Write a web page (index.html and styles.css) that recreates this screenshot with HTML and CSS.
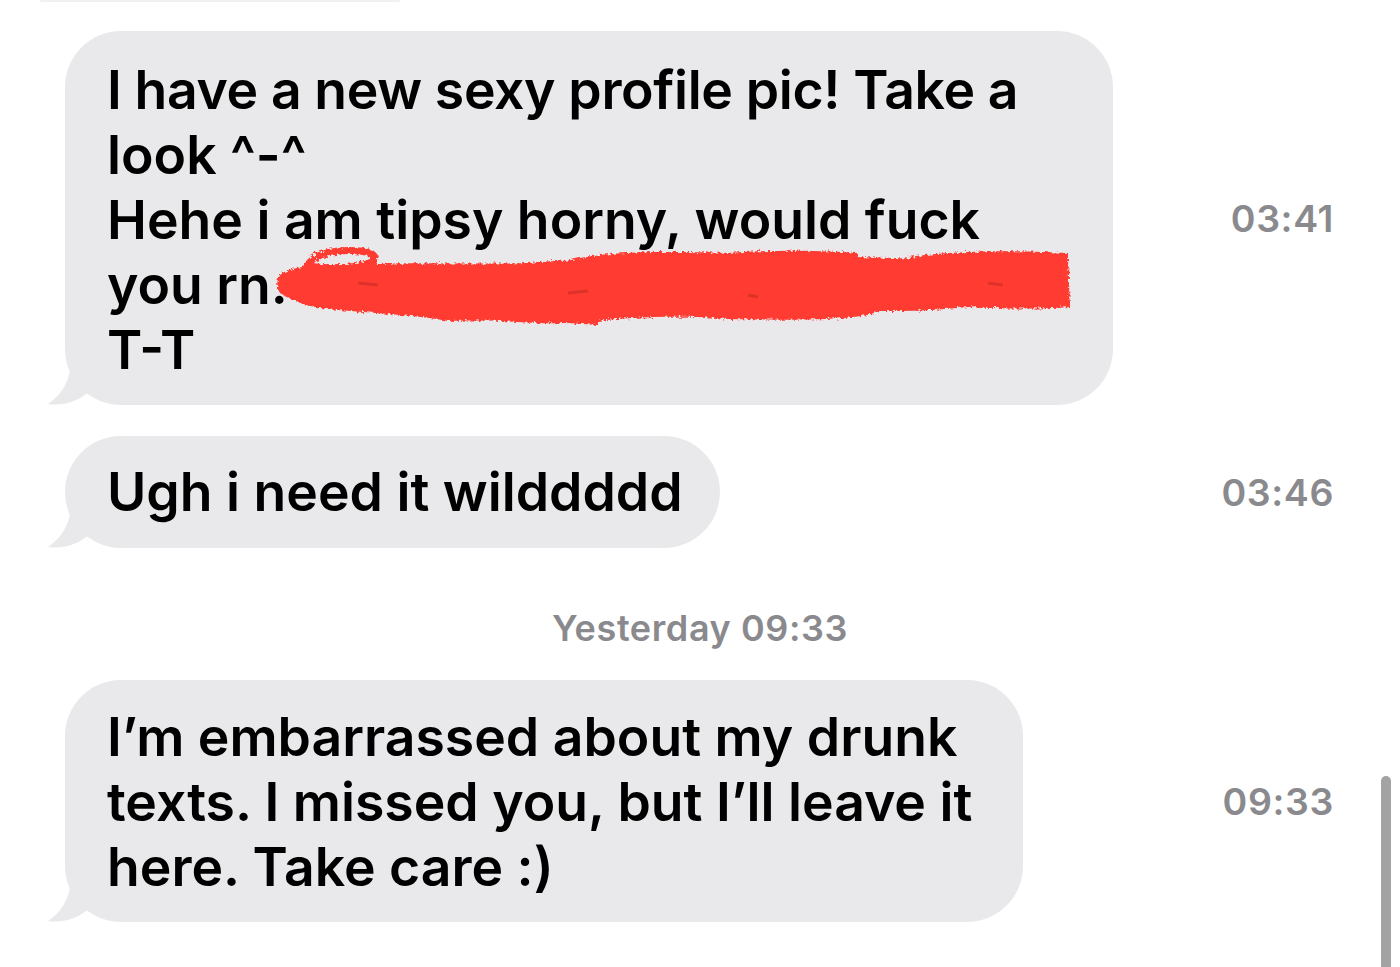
FILE: index.html
```html
<!DOCTYPE html>
<html>
<head>
<meta charset="utf-8">
<link rel="stylesheet" href="styles.css">
</head>
<body>
<div class="screen">
  <div class="prev-edge"></div>

  <div class="row row1">
    <div class="bubble b1">
      <div class="text"><span class="tight">I have a new sexy profile pic! Take a</span><br>look ^-^<br>Hehe i am tipsy horny, would fuck<br>you rn.<br>T-T</div>
      <svg class="scribble" width="810" height="84" viewBox="0 0 810 84">
        <defs>
          <filter id="rough" x="-5%" y="-20%" width="110%" height="140%">
            <feTurbulence type="fractalNoise" baseFrequency="0.35" numOctaves="2" seed="3" result="n"/>
            <feDisplacementMap in="SourceGraphic" in2="n" scale="6"/>
          </filter>
        </defs>
        <g filter="url(#rough)" fill="#ff3b30">
          <path d="M14 30 C30 22 60 20 90 22 C140 18 200 22 260 20 C300 16 330 18 340 14 C400 12 440 18 480 16 C540 12 600 14 660 16 C700 12 760 14 800 16 L802 64 C770 66 740 66 700 64 C660 68 640 68 610 68 C600 76 540 78 460 76 C420 72 360 74 330 78 C280 80 220 76 180 78 C150 72 100 70 60 66 C40 64 24 58 12 50 C8 44 8 36 14 30 Z"/>
          <path d="M300 18 C330 8 400 8 460 10 C520 6 560 8 590 10 L590 40 L300 40 Z"/>
          <path d="M640 14 C700 6 760 8 800 10 L800 40 L640 40 Z"/>
          <path d="M120 66 C180 74 260 82 300 80 L330 82 L330 68 L120 62 Z"/>
        </g>
        <path d="M40 22 C46 10 70 6 92 8 C110 10 112 18 96 22 C76 26 50 26 40 22 Z" fill="none" stroke="#ff3b30" stroke-width="7" filter="url(#rough)"/>
        <g opacity="0.25">
          <path d="M90 40 L110 42 M300 50 L320 48 M480 52 L490 54 M720 40 L735 42" stroke="#7a1a12" stroke-width="3"/>
        </g>
      </svg>
      <svg class="tail" width="50" height="36" viewBox="0 0 50 36"><path d="M50 0 L22 0 C20 14 12 26 0 34 C14 36 28 32 38 24 C42 22 46 24 50 24 Z" fill="#e9e9eb"/></svg>
    </div>
    <div class="time">03:41</div>
  </div>

  <div class="row row2">
    <div class="bubble b2">
      <div class="text">Ugh i need it wilddddd</div>
      <svg class="tail" width="50" height="36" viewBox="0 0 50 36"><path d="M50 0 L22 0 C20 14 12 26 0 34 C14 36 28 32 38 24 C42 22 46 24 50 24 Z" fill="#e9e9eb"/></svg>
    </div>
    <div class="time">03:46</div>
  </div>

  <div class="divider">Yesterday 09:33</div>

  <div class="row row3">
    <div class="bubble b3">
      <div class="text">I’m embarrassed about my drunk<br>texts. I missed you, but I’ll leave it<br>here. Take care :)</div>
      <svg class="tail" width="50" height="36" viewBox="0 0 50 36"><path d="M50 0 L22 0 C20 14 12 26 0 34 C14 36 28 32 38 24 C42 22 46 24 50 24 Z" fill="#e9e9eb"/></svg>
    </div>
    <div class="time">09:33</div>
  </div>

  <div class="scrollbar"></div>
</div>
</body>
</html>
```

FILE: styles.css
```css
* { box-sizing: border-box; }
html, body { margin: 0; padding: 0; background: #fff; }
body { font-family: Inter, "Liberation Sans", sans-serif; }
.screen {
  position: relative;
  width: 1400px;
  height: 967px;
  overflow: hidden;
  background: #fff;
}
.prev-edge {
  height: 2px;
  margin: 0 1000px 0 40px;
  background: #f0f0f2;
  border-radius: 0 0 4px 4px;
}
.row {
  display: flex;
  align-items: center;
  padding-left: 65px;
  padding-right: 66px;
}
.row1 { margin-top: 29px; }
.row2 { margin-top: 31px; }
.row3 { margin-top: 0; }
.bubble {
  position: relative;
  background: #e9e9eb;
  border-radius: 56px;
  padding: 26px 42px 28px 42px;
}
.b1 { width: 1048px; height: 374px; }
.b2 { width: 655px; height: 112px; padding-top: 23px; }
.b3 { width: 958px; height: 242px; padding-top: 24px; }
.text {
  font-size: 53.5px;
  line-height: 65px;
  font-weight: 600;
  color: #000;
  letter-spacing: 0;
  white-space: nowrap;
}
.tight { letter-spacing: -0.36px; }
.time {
  margin-left: auto;
  font-size: 37.5px;
  font-weight: 600;
  color: #8a8a8e;
  letter-spacing: 0.6px;
}
.divider {
  text-align: center;
  font-size: 36px;
  font-weight: 600;
  color: #8a8a8e;
  letter-spacing: 0.6px;
  margin-top: 58px;
  margin-bottom: 30px;
}
.tail {
  position: absolute;
  left: -17px;
  bottom: -1px;
}
.scribble {
  position: absolute;
  left: 203px;
  top: 212px;
}
.scrollbar {
  position: absolute;
  left: 1381px;
  top: 776px;
  width: 10px;
  height: 200px;
  background: #a3a3a3;
  border-radius: 5px;
}
```
